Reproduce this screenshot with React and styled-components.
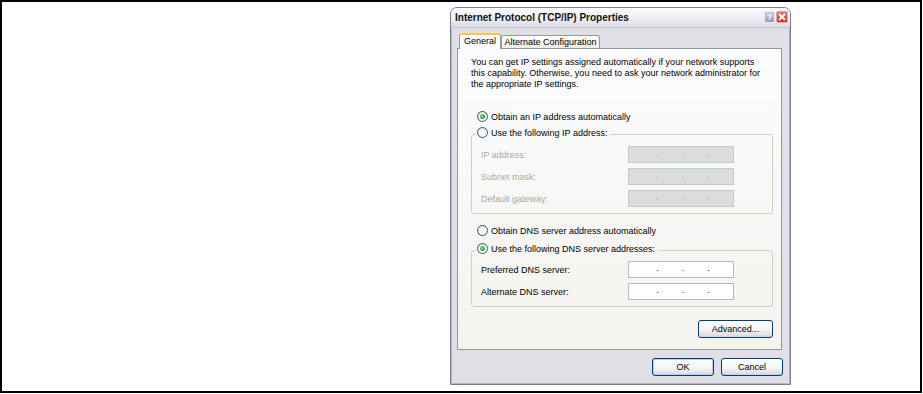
import React from 'react';
import styled, { createGlobalStyle } from 'styled-components';

const Global = createGlobalStyle`
  html, body { margin: 0; padding: 0; background: #fff; }
  body { font-family: "Liberation Sans", Arial, sans-serif; }
`;

const Frame = styled.div`
  box-sizing: border-box;
  width: 922px;
  height: 393px;
  border: 2px solid #000;
  padding: 5px 0 0 448px;
  display: flex;
  align-items: flex-start;
`;

const Dialog = styled.div`
  box-sizing: border-box;
  width: 341px;
  height: 378px;
  display: flex;
  flex-direction: column;
  border: 1px solid #7a7a96;
  border-radius: 7px 7px 0 0;
  background: #dfdfe5;
  font-size: 9px;
  color: #000;
  overflow: hidden;
`;

const TitleBar = styled.div`
  height: 20px;
  flex: none;
  display: flex;
  align-items: center;
  padding: 0 2px 1px 4px;
  box-sizing: border-box;
  background: linear-gradient(#fbfbfd, #ececf2 60%, #dcdce6);
  border-bottom: 1px solid #c4c4d4;
`;

const Title = styled.div`
  flex: 1;
  font-size: 10px;
  font-weight: bold;
  color: #111;
`;

const TitleButton = styled.div`
  box-sizing: border-box;
  width: ${(p) => p.$w}px;
  height: 12px;
  margin-left: 1px;
  border: 1px solid ${(p) => (p.$close ? '#f0a0a0' : '#e8e8f2')};
  border-radius: 2px;
  background: ${(p) =>
    p.$close
      ? 'linear-gradient(#e87a6a, #c8352a)'
      : 'linear-gradient(#c8c8dc, #9a9ab8)'};
  display: flex;
  align-items: center;
  justify-content: center;
  color: #fff;
  font-size: 9px;
  font-weight: bold;
  line-height: 1;
`;

const Body = styled.div`
  flex: 1;
  display: flex;
  flex-direction: column;
  padding: 5px 8px 0 6px;
  box-shadow: inset 1px 0 0 #b4b4c8, inset -1px 0 0 #b4b4c8, inset 0 -1px 0 #b4b4c8;
`;

const TabStrip = styled.div`
  display: flex;
  align-items: flex-end;
  height: 16px;
  padding-left: 2px;
  margin-bottom: -1px;
  position: relative;
  z-index: 1;
`;

const Tab = styled.div`
  box-sizing: border-box;
  width: ${(p) => p.$w}px;
  height: ${(p) => (p.$active ? 16 : 13)}px;
  margin-bottom: ${(p) => (p.$active ? 0 : 1)}px;
  border: 1px solid #919b9c;
  border-bottom: none;
  border-top: ${(p) => (p.$active ? '2px solid #ffc83c' : '1px solid #919b9c')};
  border-radius: 3px 3px 0 0;
  background: ${(p) => (p.$active ? '#fcfcfe' : 'linear-gradient(#ffffff, #ecebe6)')};
  display: flex;
  align-items: center;
  justify-content: center;
  padding-bottom: ${(p) => (p.$active ? 2 : 0)}px;
  white-space: nowrap;
`;

const Panel = styled.div`
  box-sizing: border-box;
  width: 325px;
  height: 302px;
  border: 1px solid #919b9c;
  background: linear-gradient(#fcfcfe, #f4f3ee);
  padding: 8px 8px 0 13px;
  display: flex;
  flex-direction: column;
`;

const Intro = styled.p`
  margin: 0;
  line-height: 11px;
  white-space: nowrap;
`;

const RadioRow = styled.div`
  display: flex;
  align-items: center;
  gap: 3px;
  height: 13px;
  margin-left: ${(p) => p.$indent || 0}px;
  margin-top: ${(p) => p.$top || 0}px;
  white-space: nowrap;
`;

const RadioDot = styled.span`
  box-sizing: border-box;
  width: 11px;
  height: 11px;
  border-radius: 50%;
  border: 1px solid #2a5a8a;
  background: radial-gradient(circle at 60% 60%, #ffffff 30%, #d6d3c8);
  display: flex;
  align-items: center;
  justify-content: center;
  &::after {
    content: '';
    width: 5px;
    height: 5px;
    border-radius: 50%;
    background: radial-gradient(circle at 40% 40%, #8ee08e, #21a121 70%);
    display: ${(p) => (p.$checked ? 'block' : 'none')};
  }
`;

const Group = styled.fieldset`
  box-sizing: border-box;
  width: 302px;
  margin: ${(p) => p.$top}px 0 0 0;
  border: 1px solid #d0d0bf;
  border-radius: 3px;
  padding: ${(p) => p.$padTop}px 0 6px 9px;
  min-width: 0;
`;

const Legend = styled.legend`
  margin-left: -5px;
  padding: 0 3px 3px 1px;
`;

const FieldGrid = styled.div`
  display: grid;
  grid-template-columns: 147px 106px;
  grid-auto-rows: 17px;
  row-gap: 5px;
  align-items: center;
`;

const FieldLabel = styled.span`
  color: ${(p) => (p.$disabled ? '#aca899' : '#000')};
  white-space: nowrap;
`;

const IpBox = styled.div`
  box-sizing: border-box;
  height: 17px;
  border: 1px solid ${(p) => (p.$disabled ? '#bccbd9' : '#a9bdd2')};
  background: ${(p) => (p.$disabled ? '#dcdcdc' : '#fff')};
  color: ${(p) => (p.$disabled ? '#9a9a9a' : '#000')};
  display: flex;
  align-items: center;
  justify-content: center;
  gap: 23px;
  padding-left: 4px;
  padding-bottom: 3px;
  line-height: 1;
`;

const ButtonRow = styled.div`
  display: flex;
  justify-content: flex-end;
  gap: 7px;
  margin-top: ${(p) => p.$top}px;
  margin-right: ${(p) => p.$right || 0}px;
`;

const Button = styled.div`
  box-sizing: border-box;
  width: ${(p) => p.$w}px;
  height: 18px;
  border: 1px solid #003c74;
  border-radius: 3px;
  background: linear-gradient(#ffffff, #f4f4f2 55%, #e2e2e8 85%, #cfd0dc);
  box-shadow: ${(p) => (p.$default ? 'inset 0 0 0 1px #b8d0f0' : 'none')};
  display: flex;
  align-items: center;
  justify-content: center;
  white-space: nowrap;
`;

function Radio({ checked, children, indent, top }) {
  return (
    <RadioRow $indent={indent} $top={top}>
      <RadioDot $checked={checked} />
      <span>{children}</span>
    </RadioRow>
  );
}

function IpField({ disabled }) {
  return (
    <IpBox $disabled={disabled}>
      <span>.</span>
      <span>.</span>
      <span>.</span>
    </IpBox>
  );
}

export default function App() {
  return (
    <>
      <Global />
      <Frame>
        <Dialog>
          <TitleBar>
            <Title>Internet Protocol (TCP/IP) Properties</Title>
            <TitleButton $w={11}>?</TitleButton>
            <TitleButton $w={12} $close>
              <svg width="8" height="8" viewBox="0 0 8 8">
                <path d="M1 1L7 7M7 1L1 7" stroke="#fff" strokeWidth="1.8" />
              </svg>
            </TitleButton>
          </TitleBar>
          <Body>
            <TabStrip>
              <Tab $w={42} $active>General</Tab>
              <Tab $w={99}>Alternate Configuration</Tab>
            </TabStrip>
            <Panel>
              <Intro>
                You can get IP settings assigned automatically if your network supports
                <br />
                this capability. Otherwise, you need to ask your network administrator for
                <br />
                the appropriate IP settings.
              </Intro>
              <Radio checked indent={6} top={20}>Obtain an IP address automatically</Radio>
              <Group $top={3} $padTop={4}>
                <Legend>
                  <Radio>Use the following IP address:</Radio>
                </Legend>
                <FieldGrid>
                  <FieldLabel $disabled>IP address:</FieldLabel>
                  <IpField disabled />
                  <FieldLabel $disabled>Subnet mask:</FieldLabel>
                  <IpField disabled />
                  <FieldLabel $disabled>Default gateway:</FieldLabel>
                  <IpField disabled />
                </FieldGrid>
              </Group>
              <Radio indent={6} top={10}>Obtain DNS server address automatically</Radio>
              <Group $top={5} $padTop={3}>
                <Legend>
                  <Radio checked>Use the following DNS server addresses:</Radio>
                </Legend>
                <FieldGrid>
                  <FieldLabel>Preferred DNS server:</FieldLabel>
                  <IpField />
                  <FieldLabel>Alternate DNS server:</FieldLabel>
                  <IpField />
                </FieldGrid>
              </Group>
              <ButtonRow $top={13}>
                <Button $w={75}>Advanced...</Button>
              </ButtonRow>
            </Panel>
            <ButtonRow $top={8} $right={-1}>
              <Button $w={62} $default>OK</Button>
              <Button $w={62}>Cancel</Button>
            </ButtonRow>
          </Body>
        </Dialog>
      </Frame>
    </>
  );
}
